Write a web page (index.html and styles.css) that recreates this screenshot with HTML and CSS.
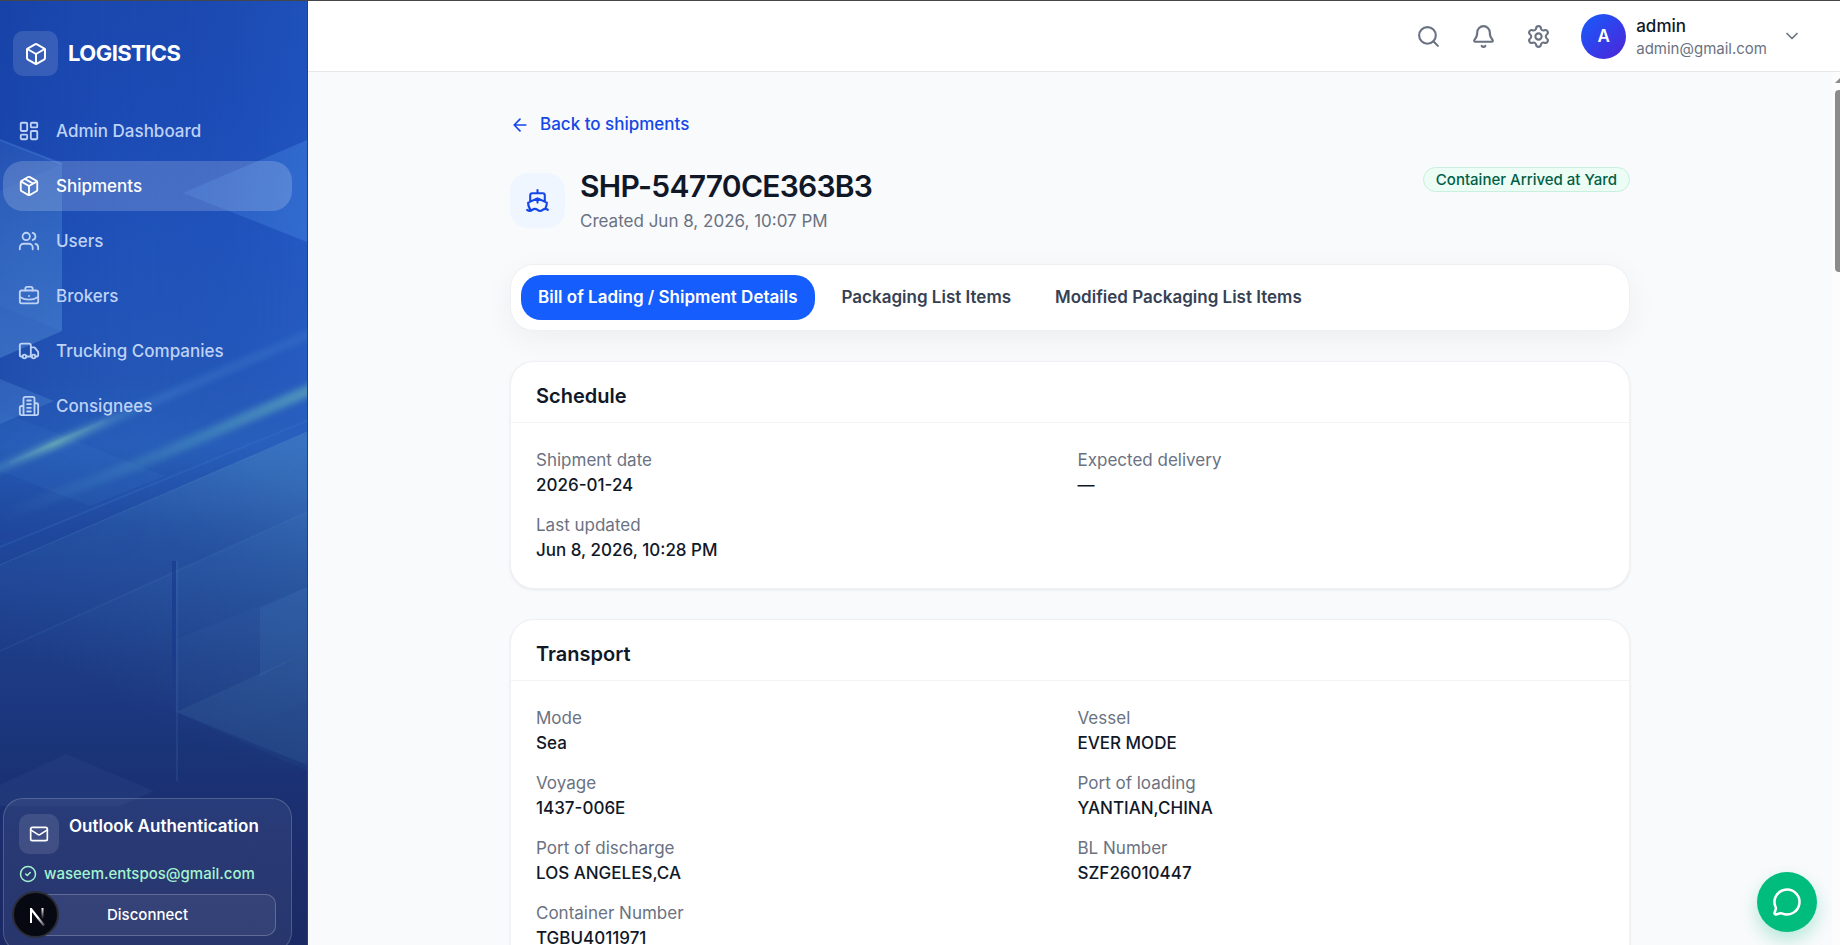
FILE: index.html
```html
<!DOCTYPE html>
<html lang="en">
<head>
<meta charset="utf-8">
<title>Logistics – Shipment</title>
<link rel="stylesheet" href="styles.css">
</head>
<body>
<aside class="sidebar">
  <svg class="backdrop" viewBox="0 0 307 944" preserveAspectRatio="none" aria-hidden="true">
    <defs>
      <linearGradient id="base" x1="0" y1="0" x2="0" y2="1">
        <stop offset="0" stop-color="#1b49b0"/><stop offset=".12" stop-color="#1c4bb5"/>
        <stop offset=".25" stop-color="#2052ba"/><stop offset=".4" stop-color="#2557b7"/>
        <stop offset=".47" stop-color="#285fba"/><stop offset=".56" stop-color="#20499e"/>
        <stop offset=".7" stop-color="#1d3b85"/><stop offset=".82" stop-color="#1a3275"/>
        <stop offset=".9" stop-color="#1c2d6c"/><stop offset="1" stop-color="#1b2a64"/>
      </linearGradient>
      <linearGradient id="side" x1="0" y1="0" x2="1" y2="0">
        <stop offset="0" stop-color="#0c2b86" stop-opacity=".2"/><stop offset=".5" stop-color="#1c4bb5" stop-opacity="0"/>
        <stop offset="1" stop-color="#3070e0" stop-opacity=".22"/>
      </linearGradient>
      <linearGradient id="side2" x1="0" y1="0" x2="0" y2="1">
        <stop offset="0" stop-color="#fff"/><stop offset=".4" stop-color="#fff"/><stop offset=".6" stop-color="#000"/>
      </linearGradient>
      <mask id="topOnly"><rect width="307" height="944" fill="url(#side2)"/></mask>
      <linearGradient id="hex" x1="0" y1="140" x2="0" y2="355" gradientUnits="userSpaceOnUse">
        <stop offset="0" stop-color="#5f9be0" stop-opacity=".15"/><stop offset="1" stop-color="#5f9be0" stop-opacity=".38"/>
      </linearGradient>
      <linearGradient id="tri" x1="180" y1="0" x2="307" y2="0" gradientUnits="userSpaceOnUse">
        <stop offset="0" stop-color="#4f92ea" stop-opacity=".18"/><stop offset="1" stop-color="#4f92ea" stop-opacity=".34"/>
      </linearGradient>
      <linearGradient id="slab" x1="230" y1="450" x2="110" y2="700" gradientUnits="userSpaceOnUse">
        <stop offset="0" stop-color="#5796c4" stop-opacity=".32"/><stop offset=".4" stop-color="#4584bd" stop-opacity=".16"/>
        <stop offset="1" stop-color="#4584bd" stop-opacity="0"/>
      </linearGradient>
      <linearGradient id="slab2" x1="260" y1="540" x2="180" y2="720" gradientUnits="userSpaceOnUse">
        <stop offset="0" stop-color="#4f92cc" stop-opacity=".1"/><stop offset="1" stop-color="#4f92cc" stop-opacity="0"/>
      </linearGradient>
      <linearGradient id="glowA" x1="0" y1="470" x2="307" y2="330" gradientUnits="userSpaceOnUse">
        <stop offset="0" stop-color="#4d90c6" stop-opacity=".45"/><stop offset=".18" stop-color="#78bcb4" stop-opacity=".75"/>
        <stop offset=".45" stop-color="#4080cc" stop-opacity=".45"/><stop offset="1" stop-color="#3d7ccf" stop-opacity=".4"/>
      </linearGradient>
      <linearGradient id="glowB" x1="0" y1="510" x2="307" y2="390" gradientUnits="userSpaceOnUse">
        <stop offset="0" stop-color="#4d90c6" stop-opacity="0"/><stop offset=".4" stop-color="#4a93bf" stop-opacity=".3"/>
        <stop offset="1" stop-color="#5ca6bb" stop-opacity=".75"/>
      </linearGradient>
      <filter id="soft" x="-20%" y="-20%" width="140%" height="140%"><feGaussianBlur stdDeviation="3"/></filter>
      <filter id="thin" x="-20%" y="-20%" width="140%" height="140%"><feGaussianBlur stdDeviation="1"/></filter>
      <linearGradient id="seam" x1="0" y1="560" x2="0" y2="712" gradientUnits="userSpaceOnUse">
        <stop offset="0" stop-color="#16378b" stop-opacity=".6"/><stop offset=".6" stop-color="#16378b" stop-opacity=".6"/>
        <stop offset="1" stop-color="#16378b" stop-opacity="0"/>
      </linearGradient>
    </defs>
    <rect width="307" height="944" fill="url(#base)"/>
    <rect width="307" height="944" fill="url(#side)" mask="url(#topOnly)"/>
    <path d="M0 139 62 163V330L0 357Z" fill="url(#hex)"/>
    <path d="M0 139 62 163" stroke="#4c8ae0" stroke-opacity=".35" stroke-width="2"/>
    <path d="M0 190 62 163V330L0 305Z" fill="#6aa6e6" fill-opacity=".07"/>
    <path d="M183 192 307 139V241Z" fill="url(#tri)"/>
    <path d="M0 378 54 400 0 423Z" fill="#5f9be0" fill-opacity=".26"/>
    <path d="M0 410 165 475 90 505 0 470Z" fill="#4384d2" fill-opacity=".12"/>
    <path d="M-10 471 317 330" stroke="url(#glowA)" stroke-width="8" filter="url(#soft)"/>
    <path d="M10 462 105 420" stroke="url(#glowA)" stroke-width="2" stroke-opacity=".6" filter="url(#thin)"/>
    <path d="M0 516 160 454 317 386" stroke="url(#glowB)" stroke-width="11" fill="none" filter="url(#soft)"/>
    <path d="M0 546 307 420" stroke="#4384d2" stroke-opacity=".2" stroke-width="2"/>
    <path d="M0 564 307 431V760L0 900Z" fill="url(#slab)"/>
    <path d="M0 564 307 431" stroke="#62a0cc" stroke-opacity=".2"/>
    <path d="M0 650 307 511V700L0 840Z" fill="url(#slab2)"/>
    <path d="M0 650 307 511" stroke="#5a97c8" stroke-opacity=".1" stroke-width="2"/>
    <path d="M176 638 307 586V770L176 711Z" fill="#4384c0" fill-opacity=".08"/>
    <path d="M260 607 307 586V651L260 675Z" fill="#5a97d0" fill-opacity=".11"/>
    <path d="M176 711 307 651V764Z" fill="#5a97c0" fill-opacity=".11"/>
    <rect x="172" y="560" width="4" height="152" fill="url(#seam)"/>
    <rect x="176" y="560" width="2" height="220" fill="#5a97d0" fill-opacity=".13"/>
    <path d="M0 784 66 753 154 790 120 805H0Z" fill="#5478b5" fill-opacity=".1"/>
  </svg>
  <div class="brand">
    <span class="brand-mark"><svg class="icon i24" viewBox="0 0 24 24"><path d="M21 8a2 2 0 0 0-1-1.73l-7-4a2 2 0 0 0-2 0l-7 4A2 2 0 0 0 3 8v8a2 2 0 0 0 1 1.73l7 4a2 2 0 0 0 2 0l7-4A2 2 0 0 0 21 16Z"/><path d="m3.3 7 8.7 5 8.7-5M12 22V12"/></svg></span>
    <span>LOGISTICS</span>
  </div>
  <nav class="nav">
    <a class="nav-item" href="#"><svg class="icon i22" viewBox="0 0 24 24"><rect width="7" height="9" x="3" y="3" rx="1"/><rect width="7" height="5" x="14" y="3" rx="1"/><rect width="7" height="9" x="14" y="12" rx="1"/><rect width="7" height="5" x="3" y="16" rx="1"/></svg>Admin Dashboard</a>
    <a class="nav-item active" href="#" aria-current="page"><svg class="icon i22" viewBox="0 0 24 24"><path d="M11 21.73a2 2 0 0 0 2 0l7-4A2 2 0 0 0 21 16V8a2 2 0 0 0-1-1.73l-7-4a2 2 0 0 0-2 0l-7 4A2 2 0 0 0 3 8v8a2 2 0 0 0 1 1.73zM12 22V12"/><path d="m3.3 7 8.7 5 8.7-5M7.5 4.27l9 5.15"/></svg>Shipments</a>
    <a class="nav-item" href="#"><svg class="icon i22" viewBox="0 0 24 24"><path d="M16 21v-2a4 4 0 0 0-4-4H6a4 4 0 0 0-4 4v2"/><circle cx="9" cy="7" r="4"/><path d="M22 21v-2a4 4 0 0 0-3-3.87M16 3.13a4 4 0 0 1 0 7.75"/></svg>Users</a>
    <a class="nav-item" href="#"><svg class="icon i22" viewBox="0 0 24 24"><path d="M12 12h.01M16 6V4a2 2 0 0 0-2-2h-4a2 2 0 0 0-2 2v2M22 13a18.15 18.15 0 0 1-20 0"/><rect width="20" height="14" x="2" y="6" rx="2"/></svg>Brokers</a>
    <a class="nav-item" href="#"><svg class="icon i22" viewBox="0 0 24 24"><path d="M14 18V6a2 2 0 0 0-2-2H4a2 2 0 0 0-2 2v11a1 1 0 0 0 1 1h2M15 18H9M19 18h2a1 1 0 0 0 1-1v-3.65a1 1 0 0 0-.22-.624l-3.48-4.35A1 1 0 0 0 17.520 8H14"/><circle cx="17" cy="18" r="2"/><circle cx="7" cy="18" r="2"/></svg>Trucking Companies</a>
    <a class="nav-item" href="#"><svg class="icon i22" viewBox="0 0 24 24"><path d="M6 22V4a2 2 0 0 1 2-2h8a2 2 0 0 1 2 2v18ZM6 12H4a2 2 0 0 0-2 2v6a2 2 0 0 0 2 2h2M18 9h2a2 2 0 0 1 2 2v9a2 2 0 0 1-2 2h-2M10 6h4M10 10h4M10 14h4M10 18h4"/></svg>Consignees</a>
  </nav>
  <section class="outlook">
    <div class="outlook-head">
      <span class="outlook-mark"><svg class="icon i20" viewBox="0 0 24 24"><rect width="20" height="16" x="2" y="4" rx="2"/><path d="m22 7-8.970 5.700a1.940 1.940 0 0 1-2.060 0L2 7"/></svg></span>
      <h2>Outlook Authentication</h2>
    </div>
    <p class="outlook-mail"><svg class="icon i18" viewBox="0 0 24 24"><circle cx="12" cy="12" r="10"/><path d="m9 12 2 2 4-4"/></svg>waseem.entspos@gmail.com</p>
    <button class="disconnect" type="button">Disconnect</button>
  </section>
  <button class="dev-badge" type="button" aria-label="Developer tools">
    <svg viewBox="0 0 46 46" width="46" height="46"><defs><linearGradient id="n1" x1="24" y1="24" x2="31" y2="33" gradientUnits="userSpaceOnUse"><stop stop-color="#fff"/><stop offset="1" stop-color="#fff" stop-opacity=".2"/></linearGradient><linearGradient id="n2" x1="0" y1="15" x2="0" y2="26" gradientUnits="userSpaceOnUse"><stop stop-color="#fff"/><stop offset="1" stop-color="#fff" stop-opacity="0"/></linearGradient></defs><path d="M17 16 30 32.500" fill="none" stroke="url(#n1)" stroke-width="2.200"/><path d="M17 15V30" stroke="#fff" stroke-width="2"/><path d="M28.500 15V26" stroke="url(#n2)" stroke-width="2"/></svg>
  </button>
</aside>

<div class="page">
  <header class="topbar">
    <button class="tool" type="button" aria-label="Search"><svg class="icon i25" viewBox="0 0 24 24"><circle cx="11" cy="11" r="8"/><path d="m21 21-4.340-4.340"/></svg></button>
    <button class="tool" type="button" aria-label="Notifications"><svg class="icon i25" viewBox="0 0 24 24"><path d="M10.268 21a2 2 0 0 0 3.464 0M3.262 15.326A1 1 0 0 0 4 17h16a1 1 0 0 0 .74-1.673C19.410 13.956 18 12.499 18 8A6 6 0 0 0 6 8c0 4.499-1.411 5.956-2.738 7.326"/></svg></button>
    <button class="tool" type="button" aria-label="Settings"><svg class="icon i25" viewBox="0 0 24 24"><path d="M9.671 4.136a2.340 2.340 0 0 1 4.659 0 2.340 2.340 0 0 0 3.319 1.915 2.340 2.340 0 0 1 2.330 4.033 2.340 2.340 0 0 0 0 3.831 2.340 2.340 0 0 1-2.330 4.033 2.340 2.340 0 0 0-3.319 1.915 2.340 2.340 0 0 1-4.659 0 2.340 2.340 0 0 0-3.320-1.915 2.340 2.340 0 0 1-2.330-4.033 2.340 2.340 0 0 0 0-3.831A2.340 2.340 0 0 1 6.350 6.051a2.340 2.340 0 0 0 3.319-1.915"/><circle cx="12" cy="12" r="3"/></svg></button>
    <button class="account" type="button">
      <span class="avatar">A</span>
      <span class="who"><span class="who-name">admin</span><span class="who-mail">admin@gmail.com</span></span>
      <svg class="icon i20" viewBox="0 0 24 24"><path d="m6 9 6 6 6-6"/></svg>
    </button>
  </header>
  <div class="viewport">
    <main class="content">
      <a class="back" href="#"><svg class="icon i20" viewBox="0 0 24 24"><path d="m12 19-7-7 7-7M19 12H5"/></svg>Back to shipments</a>
      <div class="title-row">
        <span class="ship-mark"><svg class="icon i25" viewBox="0 0 24 24"><path d="M12 10.189V14M12 2v3M19 13V7a2 2 0 0 0-2-2H7a2 2 0 0 0-2 2v6M19.380 20A11.600 11.600 0 0 0 21 14l-8.188-3.639a2 2 0 0 0-1.624 0L3 14a11.600 11.600 0 0 0 2.810 7.760M2 21c.6.500 1.200 1 2.500 1 2.500 0 2.500-2 5-2 1.300 0 1.900.5 2.500 1s1.200 1 2.500 1c2.500 0 2.500-2 5-2 1.300 0 1.900.5 2.500 1"/></svg></span>
        <div class="title-text">
          <h1>SHP-54770CE363B3</h1>
          <p>Created Jun 8, 2026, 10:07 PM</p>
        </div>
        <span class="status">Container Arrived at Yard</span>
      </div>
      <div class="tabs" role="tablist">
        <button class="tab selected" type="button" role="tab" aria-selected="true">Bill of Lading / Shipment Details</button>
        <button class="tab" type="button" role="tab" aria-selected="false">Packaging List Items</button>
        <button class="tab" type="button" role="tab" aria-selected="false">Modified Packaging List Items</button>
      </div>
      <section class="card">
        <h2>Schedule</h2>
        <dl class="fields">
          <div><dt>Shipment date</dt><dd>2026-01-24</dd></div>
          <div><dt>Expected delivery</dt><dd>—</dd></div>
          <div><dt>Last updated</dt><dd>Jun 8, 2026, 10:28 PM</dd></div>
        </dl>
      </section>
      <section class="card">
        <h2>Transport</h2>
        <dl class="fields">
          <div><dt>Mode</dt><dd>Sea</dd></div>
          <div><dt>Vessel</dt><dd>EVER MODE</dd></div>
          <div><dt>Voyage</dt><dd>1437-006E</dd></div>
          <div><dt>Port of loading</dt><dd>YANTIAN,CHINA</dd></div>
          <div><dt>Port of discharge</dt><dd>LOS ANGELES,CA</dd></div>
          <div><dt>BL Number</dt><dd>SZF26010447</dd></div>
          <div><dt>Container Number</dt><dd>TGBU4011971</dd></div>
        </dl>
      </section>
    </main>
    <div class="scrollbar" aria-hidden="true"><svg width="5" height="5" viewBox="0 0 5 5"><path d="M0 5 5 0V5Z" fill="#8b8b8b"/></svg><span class="thumb"></span></div>
  </div>
</div>
<button class="chat" type="button" aria-label="Open chat"><svg class="icon i30" viewBox="0 0 24 24"><path d="M2.992 16.342a2 2 0 0 1 .094 1.167l-1.065 3.290a1 1 0 0 0 1.236 1.168l3.413-.998a2 2 0 0 1 1.099.092 10 10 0 1 0-4.777-4.719"/></svg></button>
</body>
</html>
```
FILE: styles.css
```css
* { box-sizing: border-box; }
body, h1, h2, p, dl, dd { margin: 0; }
body {
  display: flex;
  height: 100vh;
  overflow: hidden;
  border-top: 1px solid #45464a;
  background: #f9fafc;
  color: #101828;
  font-family: Inter, "Liberation Sans", sans-serif;
  font-size: 17px;
  line-height: 25px;
}
button { font: inherit; color: inherit; background: none; border: 0; padding: 0; cursor: pointer; }
a { text-decoration: none; color: inherit; }

.icon { flex: none; fill: none; stroke: currentColor; stroke-width: 2; stroke-linecap: round; stroke-linejoin: round; }
.i18 { width: 18px; height: 18px; }
.i20 { width: 20px; height: 20px; }
.i22 { width: 22px; height: 22px; }
.i24 { width: 24px; height: 24px; }
.i25 { width: 25px; height: 25px; }
.i30 { width: 30px; height: 30px; }

/* Sidebar */
.sidebar {
  position: relative;
  flex: none;
  display: flex;
  flex-direction: column;
  width: 308px;
  padding: 30px 15px 0 3px;
  border-right: 1px solid #2b3f73;
  overflow: hidden;
  color: #fff;
}
.backdrop { position: absolute; inset: 0; width: 100%; height: 100%; }
.brand, .nav, .outlook { position: relative; }
.brand {
  display: flex;
  align-items: center;
  gap: 10px;
  padding-left: 10px;
  font-size: 22px;
  font-weight: 700;
  letter-spacing: -0.025em;
}
.brand-mark, .outlook-mark {
  flex: none;
  display: grid;
  place-items: center;
  border-radius: 10px;
  background: rgb(255 255 255 / 13%);
}
.brand-mark { width: 45px; height: 45px; }
.nav { display: flex; flex-direction: column; gap: 5px; margin-top: 30px; }
.nav-item {
  display: flex;
  align-items: center;
  gap: 16px;
  height: 50px;
  padding: 0 15px;
  border-radius: 20px;
  color: #bed2f5;
  font-weight: 500;
}
.nav-item.active { background: rgb(255 255 255 / 18%); color: #fff; }

.outlook {
  margin-top: auto;
  margin-bottom: -7px;
  padding: 15px;
  border: 1px solid rgb(255 255 255 / 18%);
  border-radius: 20px;
  background: rgb(255 255 255 / 6%);
}
.outlook-head { display: flex; gap: 10px; }
.outlook-mark { width: 40px; height: 40px; background: rgb(255 255 255 / 11%); }
.outlook h2 { font-size: 17px; line-height: 25px; font-weight: 600; white-space: nowrap; }
.outlook-mail {
  display: flex;
  align-items: center;
  gap: 7px;
  margin: 10px 0;
  font-size: 15px;
  line-height: 20px;
  font-weight: 500;
  color: #a4f4cf;
}
.disconnect {
  width: 100%;
  height: 42px;
  border: 1px solid rgb(255 255 255 / 22%);
  border-radius: 10px;
  background: rgb(255 255 255 / 6%);
  font-size: 15px;
  line-height: 20px;
  font-weight: 500;
}
.dev-badge {
  position: absolute;
  left: 12px;
  bottom: 7px;
  display: grid;
  place-items: center;
  width: 47px;
  height: 47px;
  border: 2px solid #2b2c35;
  border-radius: 50%;
  background: #060812;
}

/* Page */
.page { flex: 1; min-width: 0; display: flex; flex-direction: column; }
.topbar {
  flex: none;
  display: flex;
  align-items: center;
  justify-content: flex-end;
  gap: 10px;
  height: 71px;
  padding-right: 38px;
  border-bottom: 1px solid #e5e7eb;
  background: #fff;
}
.tool { display: grid; place-items: center; width: 45px; height: 45px; color: #6a7282; }
.account { display: flex; align-items: center; gap: 10px; margin-left: 10px; color: #6a7282; text-align: left; }
.avatar {
  display: grid;
  place-items: center;
  width: 45px;
  height: 45px;
  border-radius: 50%;
  background: linear-gradient(135deg, #155dfc, #4f23d8);
  color: #fff;
  font-weight: 600;
}
.who { display: flex; flex-direction: column; margin-right: 5px; }
.who-name { line-height: 25px; font-weight: 500; color: #101828; }
.who-mail { font-size: 15px; line-height: 20px; }

.viewport { flex: 1; min-height: 0; display: grid; grid-template-columns: 1fr 8px; overflow: hidden; }
.content {
  display: flex;
  flex-direction: column;
  width: 100%;
  max-width: 1120px;
  margin: 0 auto;
  padding-top: 40px;
}
.back { align-self: flex-start; display: flex; align-items: center; gap: 10px; color: #1447e6; font-weight: 500; }
.title-row { display: flex; align-items: flex-start; gap: 15px; margin-top: 30px; }
.ship-mark {
  display: grid;
  place-items: center;
  width: 55px;
  height: 55px;
  margin-top: 6px;
  border-radius: 18px;
  background: #eff6ff;
  color: #1447e6;
}
.title-text { flex: 1; }
h1 { font-size: 30px; line-height: 38px; font-weight: 600; letter-spacing: -0.025em; }
.title-text p { margin-top: 4px; color: #6a7282; }
.status {
  padding: 1px 12px;
  border: 1px solid #c9f0de;
  border-radius: 20px;
  background: #ecfdf5;
  color: #006045;
  font-size: 15px;
  line-height: 21px;
  font-weight: 500;
}
.tabs {
  display: flex;
  gap: 10px;
  margin-top: 30px;
  padding: 10px;
  border: 1px solid #eef0f3;
  border-radius: 24px;
  background: #fff;
  box-shadow: 0 8px 30px rgb(0 0 0 / 5%);
}
.tab { height: 45px; padding: 0 17px; border-radius: 20px; color: #364153; font-weight: 600; }
.tab.selected { background: #155dfc; color: #fff; }
.card {
  margin-top: 30px;
  border: 1px solid #f0f1f4;
  border-radius: 24px;
  background: #fff;
  box-shadow: 0 1px 3px rgb(0 0 0 / 8%);
}
.card h2 { padding: 22px 25px 13px; border-bottom: 1px solid #f3f4f6; font-size: 20px; line-height: 25px; font-weight: 600; }
.fields { display: grid; grid-template-columns: 1fr 1fr; gap: 15px; padding: 25px; }
.fields dt { color: #6a7282; }
.fields dd { font-weight: 500; }

.scrollbar { display: flex; flex-direction: column; align-items: flex-end; padding-top: 6px; background: #fcfcfd; }
.thumb { width: 5px; height: 182px; margin-top: 7px; border-radius: 4px 0 0 4px; background: #8b8b8b; }

.chat {
  position: fixed;
  right: 23px;
  bottom: 13px;
  display: grid;
  place-items: center;
  width: 60px;
  height: 60px;
  border-radius: 50%;
  background: #00bc7d;
  color: #fff;
  box-shadow: 0 8px 18px rgb(0 188 125 / 28%);
}
```
